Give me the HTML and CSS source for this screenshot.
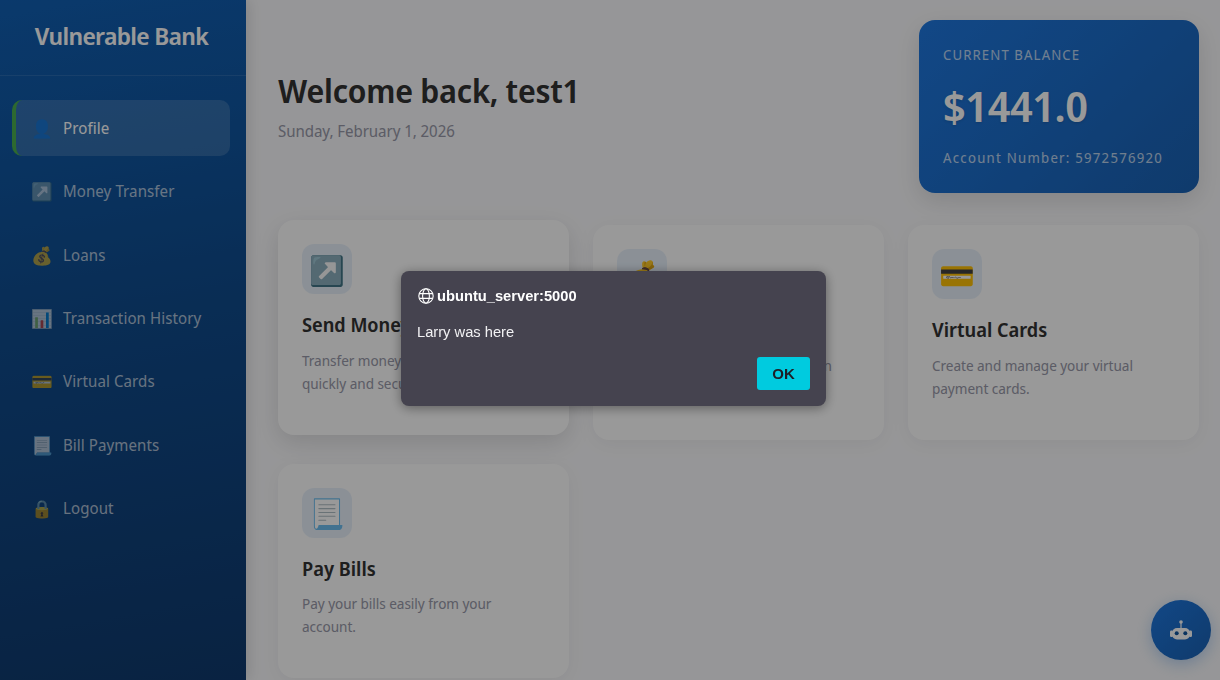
FILE: index.html
```html
<!DOCTYPE html>
<html lang="en">
<head>
<meta charset="utf-8">
<title>Vulnerable Bank</title>
<link rel="stylesheet" href="styles.css">
</head>
<body>
<div class="app">
  <aside class="sidebar">
    <div class="brand">Vulnerable Bank</div>
    <nav class="nav">
      <a class="nav-item active"><span class="nav-icon">👤</span>Profile</a>
      <a class="nav-item"><span class="nav-icon">↗️</span>Money Transfer</a>
      <a class="nav-item"><span class="nav-icon">💰</span>Loans</a>
      <a class="nav-item"><span class="nav-icon">📊</span>Transaction History</a>
      <a class="nav-item"><span class="nav-icon">💳</span>Virtual Cards</a>
      <a class="nav-item"><span class="nav-icon">📃</span>Bill Payments</a>
      <a class="nav-item"><span class="nav-icon">🔒</span>Logout</a>
    </nav>
  </aside>
  <main class="main">
    <header class="top">
      <div class="welcome">
        <h1>Welcome back, test1</h1>
        <p>Sunday, February 1, 2026</p>
      </div>
      <section class="balance">
        <div class="balance-label">CURRENT BALANCE</div>
        <div class="balance-amount">$1441.0</div>
        <div class="balance-account">Account Number: 5972576920</div>
      </section>
    </header>
    <section class="cards">
      <article class="card lifted">
        <div class="card-icon">↗️</div>
        <h3>Send Money</h3>
        <p>Transfer money to other accounts quickly and securely.</p>
      </article>
      <article class="card">
        <div class="card-icon">💰</div>
        <h3>Request Loan</h3>
        <p>Request a personal or bridge loan quickly and easily.</p>
      </article>
      <article class="card">
        <div class="card-icon">💳</div>
        <h3>Virtual Cards</h3>
        <p>Create and manage your virtual payment cards.</p>
      </article>
      <article class="card">
        <div class="card-icon">📃</div>
        <h3>Pay Bills</h3>
        <p>Pay your bills easily from your account.</p>
      </article>
    </section>
  </main>
</div>
<button class="chat" aria-label="Chat">
  <svg width="24" height="24" viewBox="0 0 24 24" class="robot">
    <circle cx="12" cy="4" r="1.8" fill="#fff"/>
    <rect x="11.4" y="4" width="1.2" height="7" fill="#fff"/>
    <rect x="3" y="10" width="18" height="11.5" rx="5" fill="#fff"/>
    <rect x="1" y="12.5" width="3" height="6.5" rx="1.2" fill="#fff"/>
    <rect x="20" y="12.5" width="3" height="6.5" rx="1.2" fill="#fff"/>
    <circle cx="7.7" cy="15.3" r="2" fill="#0f559f"/>
    <circle cx="16.3" cy="15.3" r="2" fill="#0f559f"/>
  </svg>
</button>
<div class="overlay"></div>
<div class="dialog">
  <div class="dialog-title">
    <svg class="globe" width="16" height="16" viewBox="0 0 16 16" fill="none" stroke="#fff" stroke-width="1.1">
      <circle cx="8" cy="8" r="7.2"/>
      <ellipse cx="8" cy="8" rx="3.4" ry="7.2"/>
      <path d="M1.2 5.6h13.6M1.2 10.4h13.6"/>
    </svg>
    <span>ubuntu_server:5000</span>
  </div>
  <div class="dialog-msg">Larry was here</div>
  <div class="dialog-actions"><button class="ok">OK</button></div>
</div>
</body>
</html>
```
FILE: styles.css
```css
* { box-sizing: border-box; }
html, body { margin: 0; height: 100%; overflow: hidden; }
body {
  font-family: "Noto Sans Display", "Noto Sans", "Noto Color Emoji", sans-serif;
  background: #fbfbfd;
  color: #333;
}
.app { display: flex; height: 680px; }
.sidebar {
  width: 246px;
  flex: none;
  background: linear-gradient(170deg, #1160b4 0%, #0f4c8e 45%, #103a6e 100%);
  box-shadow: 4px 0 12px rgba(0,0,0,.1);
  color: #fff;
}
.brand {
  height: 76px;
  padding: 19px 3px 0 0;
  border-bottom: 1px solid rgba(255,255,255,.1);
  text-align: center;
  font-size: 24px;
  line-height: 33px;
  font-weight: 600;
  letter-spacing: -.65px;
}
.nav { padding: 24.4px 16px 0 12px; display: flex; flex-direction: column; gap: 8px; }
.nav-item {
  display: flex;
  align-items: center;
  height: 55.33px;
  padding-left: 19px;
  font-size: 16px;
  letter-spacing: .06px;
  color: rgba(255,255,255,.66);
  border-radius: 10px;
}
.nav-item.active {
  background: rgba(255,255,255,.15);
  border-left: 4px solid #4caf50;
  padding-left: 15px;
  color: #fff;
}
.nav-icon { width: 32px; flex: none; font-size: 17.6px; letter-spacing: 0; }
.main { flex: 1; padding: 20px 21px 0 32px; min-width: 0; }
.top { display: flex; justify-content: space-between; align-items: center; height: 173px; margin-bottom: 32.2px; }
.welcome { padding-bottom: 3px; }
h1 { margin: 0 0 7px; font-size: 32px; line-height: 44px; font-weight: 600; color: #333; letter-spacing: -.22px; }
.welcome p { margin: 0; font-size: 16px; line-height: 22px; color: #999aaa; letter-spacing: -.07px; }
.balance {
  width: 280px;
  height: 173px;
  padding: 24px;
  border-radius: 16px;
  background: linear-gradient(135deg, #1e78e0 0%, #1a62b4 100%);
  box-shadow: 0 8px 24px rgba(0,0,0,.12);
  color: #fff;
}
.balance-label { font-size: 14px; line-height: 22px; letter-spacing: 1.1px; opacity: .7; }
.balance-amount { font-size: 42px; line-height: 56px; margin-top: 12px; font-weight: 600; letter-spacing: -.4px; text-shadow: 0 1px 3px rgba(0,0,0,.15); }
.balance-account { font-size: 14px; line-height: 22px; margin-top: 13px; letter-spacing: 1.25px; opacity: .7; }
.cards { display: grid; grid-template-columns: repeat(3, 291px); gap: 24px; }
.card {
  height: 214.4px;
  padding: 24px;
  background: #fff;
  border-radius: 16px;
  box-shadow: 0 4px 20px rgba(0,0,0,.05);
}
.card.lifted { transform: translateY(-5px); box-shadow: 0 8px 24px rgba(0,0,0,.12); }
.card-icon {
  width: 50px;
  height: 50px;
  border-radius: 12px;
  background: rgba(26,115,217,.1);
  display: flex;
  align-items: center;
  justify-content: center;
  font-size: 28.8px;
}
h3 { margin: 16px 0 8.8px; font-size: 19.2px; line-height: 30px; font-weight: 600; color: #333; }
.card p { margin: 0; font-size: 14.4px; line-height: 23px; color: #999aaa; letter-spacing: -.05px; }
.chat {
  position: fixed;
  right: 9px;
  bottom: 20px;
  width: 60px;
  height: 60px;
  border: 0;
  padding: 0;
  border-radius: 50%;
  background: linear-gradient(135deg, #1e78e0, #1a62b4);
  box-shadow: 0 4px 16px rgba(26,115,217,.3);
  display: flex;
  align-items: center;
  justify-content: center;
}
.overlay { position: fixed; inset: 0; background: rgba(0,0,0,.4); }
.dialog {
  position: fixed;
  left: 401px;
  top: 271px;
  width: 425px;
  height: 135px;
  padding: 16px;
  border-radius: 8px;
  background: #45434f;
  box-shadow: 0 2px 12px rgba(0,0,0,.4);
  color: #fff;
  font-family: "Liberation Sans", Arial, sans-serif;
}
.dialog-title { display: flex; align-items: center; gap: 3px; height: 17px; font-size: 14.7px; font-weight: 700; margin-left: 1px; }
.dialog-msg { margin-top: 19px; font-size: 14.7px; line-height: 18px; color: #f1f1f3; }
.dialog-actions { display: flex; justify-content: flex-end; margin-top: 16px; }
.ok {
  width: 53px;
  height: 33px;
  border: 0;
  border-radius: 3px;
  background: #00cbdf;
  color: #1e1f26;
  font-family: "Liberation Sans", Arial, sans-serif;
  font-size: 15px;
  font-weight: 700;
}
```
